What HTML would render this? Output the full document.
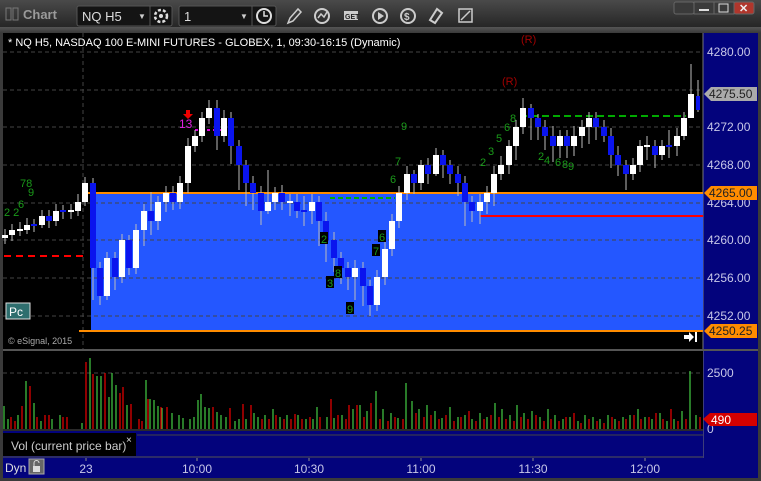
<!DOCTYPE html>
<html><head><meta charset="utf-8"><style>
html,body{margin:0;padding:0;background:#3a3a3a;width:761px;height:481px;overflow:hidden;font-family:"Liberation Sans",sans-serif}
svg{display:block}
</style></head><body>
<svg width="761" height="481" viewBox="0 0 761 481" xmlns="http://www.w3.org/2000/svg" font-family="Liberation Sans, sans-serif">
<defs>
<linearGradient id="tb" x1="0" y1="0" x2="0" y2="1"><stop offset="0" stop-color="#4a4a4a"/><stop offset="1" stop-color="#262626"/></linearGradient>
<linearGradient id="tb2" x1="0" y1="0" x2="0" y2="1"><stop offset="0" stop-color="#555"/><stop offset="1" stop-color="#3a3a3a"/></linearGradient>
</defs>
<rect x="0" y="0" width="761" height="481" fill="#3a3a3a"/>
<rect x="0" y="0" width="761" height="27" fill="url(#tb)"/>
<rect x="0" y="27" width="761" height="6" fill="url(#tb2)"/>
<!-- title -->
<rect x="6" y="8" width="5" height="12" fill="none" stroke="#777"/><rect x="13" y="8" width="5" height="12" fill="none" stroke="#777"/>
<text x="23" y="19" font-size="13" fill="#9a9a9a" font-weight="bold">Chart</text>
<rect x="77" y="6" width="95" height="20" rx="2" fill="#141414" stroke="#555"/>
<text x="82" y="21" font-size="13" fill="#ddd">NQ H5</text>
<text x="138" y="19" font-size="8" fill="#ccc">▼</text>
<line x1="150" y1="6" x2="150" y2="26" stroke="#555"/>
<circle cx="161" cy="16" r="6" fill="none" stroke="#ddd" stroke-width="2.5" stroke-dasharray="3 2"/><circle cx="161" cy="16" r="2" fill="#ddd"/>
<rect x="179" y="6" width="97" height="20" rx="2" fill="#141414" stroke="#555"/>
<text x="184" y="21" font-size="13" fill="#ddd">1</text>
<text x="240" y="19" font-size="8" fill="#ccc">▼</text>
<line x1="252" y1="6" x2="252" y2="26" stroke="#555"/>
<circle cx="264" cy="16" r="7" fill="none" stroke="#ddd" stroke-width="2"/><path d="M264 11V16H268" stroke="#ddd" stroke-width="1.5" fill="none"/>
<path d="M288 23L290 18L298 9L301 12L293 21Z" fill="none" stroke="#ccc" stroke-width="1.5"/>
<circle cx="322" cy="16" r="7" fill="none" stroke="#ccc" stroke-width="2"/><path d="M318 18L321 14L324 17L327 12" stroke="#ccc" fill="none" stroke-width="1.5"/>
<rect x="344" y="11" width="14" height="9" fill="#ccc"/><text x="345" y="19" font-size="7" font-weight="bold" fill="#222">GET</text>
<circle cx="380" cy="16" r="7" fill="none" stroke="#ccc" stroke-width="2"/><path d="M378 12L384 16L378 20Z" fill="#ccc"/>
<circle cx="408" cy="16" r="7" fill="none" stroke="#ccc" stroke-width="2"/><text x="404" y="20" font-size="10" fill="#ccc" font-weight="bold">$</text>
<path d="M430 20L437 9L442 13L435 23Z" fill="none" stroke="#ccc" stroke-width="2"/>
<rect x="459" y="9" width="13" height="13" fill="none" stroke="#ccc" stroke-width="1.5"/><path d="M461 20L470 11" stroke="#ccc" stroke-width="1.5"/>
<rect x="674" y="2" width="20" height="12" rx="2" fill="#3a3a3a" stroke="#666"/>
<rect x="694" y="2" width="20" height="12" fill="#3a3a3a" stroke="#666"/><line x1="699" y1="10" x2="709" y2="10" stroke="#ddd" stroke-width="2"/>
<rect x="714" y="2" width="20" height="12" fill="#3a3a3a" stroke="#666"/><rect x="719" y="4" width="9" height="8" fill="none" stroke="#ddd"/>
<rect x="734" y="2" width="20" height="12" rx="2" fill="#b0362c" stroke="#666"/><text x="739" y="12" font-size="11" font-weight="bold" fill="#eee">✕</text>

<!-- chart area -->
<rect x="3" y="33" width="700" height="316" fill="#000"/>
<rect x="703" y="33" width="55" height="445" fill="#03037c"/>
<line x1="703" y1="33" x2="703" y2="458" stroke="#777"/>
<rect x="91" y="193" width="612" height="138" fill="#2457ff"/>
<g stroke="#444" stroke-dasharray="4 3">
<line x1="3" y1="52" x2="703" y2="52"/><line x1="3" y1="90" x2="703" y2="90"/><line x1="3" y1="127" x2="703" y2="127"/><line x1="3" y1="165" x2="703" y2="165"/><line x1="3" y1="203" x2="703" y2="203"/><line x1="3" y1="240" x2="703" y2="240"/><line x1="3" y1="278" x2="703" y2="278"/><line x1="3" y1="316" x2="703" y2="316"/>
<line x1="83" y1="33" x2="83" y2="458"/>
</g>
<line x1="84" y1="193" x2="703" y2="193" stroke="#ff8c00" stroke-width="2"/>
<line x1="79" y1="331" x2="703" y2="331" stroke="#ff8c00" stroke-width="2"/>
<line x1="480" y1="216" x2="703" y2="216" stroke="#f00" stroke-width="2"/>
<line x1="4" y1="256" x2="83" y2="256" stroke="#f00" stroke-width="2" stroke-dasharray="7 5"/>
<line x1="520" y1="116" x2="686" y2="116" stroke="#0a0" stroke-width="2" stroke-dasharray="7 4"/>
<line x1="330" y1="198" x2="395" y2="198" stroke="#0a0" stroke-width="2" stroke-dasharray="5 3"/>
<line x1="195" y1="130" x2="225" y2="130" stroke="#d0d" stroke-width="2" stroke-dasharray="3 3"/>

<!-- wicks -->
<path stroke="#bbb" fill="none" d="M5 229V244M12 224V241M20 222V236M27 218V234M34 219V232M42 210V228M49 210V228M56 204V226M63 205V219M71 204V219M78 194V216M85 177V206M93 178V300M100 262V305M107 252V300M115 252V290M122 234V283M129 235V275M136 224V274M144 204V246M151 192V235M158 196V230M166 186V212M173 186V210M180 176V209M188 138V193M195 130V152M202 112V142M209 100V124M217 100V150M224 110V142M231 112V164M239 140V190M246 160V206M253 176V210M261 186V225M268 170V214M275 187V210M282 185V210M290 194V216M297 194V218M304 196V226M312 194V224M319 196V246M326 212V262M334 232V272M341 252V284M348 262V290M355 260V300M363 262V306M370 280V316M377 270V311M385 242V285M392 214V256M399 186V228M407 166V200M414 170V194M421 160V190M428 158V184M436 148V176M443 150V178M450 160V184M458 166V196M465 176V226M472 196V222M480 194V224M487 186V214M494 166V206M501 156V180M509 140V174M516 120V160M523 98V134M531 104V140M538 114V140M545 120V150M553 126V162M560 130V158M567 130V158M574 126V156M582 120V148M589 112V144M596 112V140M604 120V142M611 128V168M618 146V176M626 160V190M633 158V180M640 140V172M647 136V160M655 140V168M662 140V160M669 130V158M677 128V156M684 112V140M691 64V110M698 80V112"/>
<!-- candles -->
<g fill="#fff">
<rect x="2" y="235" width="6" height="3"/><rect x="9" y="230" width="6" height="5"/><rect x="17" y="229" width="6" height="2"/><rect x="24" y="225" width="6" height="5"/><rect x="39" y="216" width="6" height="9"/><rect x="53" y="211" width="6" height="10"/><rect x="68" y="210" width="6" height="2"/><rect x="75" y="202" width="6" height="9"/><rect x="82" y="183" width="6" height="19"/>
<rect x="104" y="258" width="6" height="38"/><rect x="119" y="240" width="6" height="37"/><rect x="133" y="230" width="6" height="38"/><rect x="141" y="211" width="6" height="19"/><rect x="155" y="202" width="6" height="19"/><rect x="163" y="193" width="6" height="9"/><rect x="177" y="183" width="6" height="19"/><rect x="185" y="146" width="6" height="37"/><rect x="192" y="136" width="6" height="10"/><rect x="199" y="118" width="6" height="18"/><rect x="206" y="108" width="6" height="10"/><rect x="221" y="118" width="6" height="18"/>
<rect x="265" y="202" width="6" height="9"/><rect x="272" y="193" width="6" height="9"/><rect x="287" y="201" width="6" height="2"/><rect x="309" y="202" width="6" height="9"/><rect x="352" y="268" width="6" height="9"/><rect x="374" y="277" width="6" height="28"/><rect x="382" y="249" width="6" height="28"/><rect x="389" y="221" width="6" height="28"/><rect x="396" y="193" width="6" height="28"/><rect x="404" y="174" width="6" height="19"/><rect x="418" y="165" width="6" height="18"/><rect x="433" y="155" width="6" height="19"/>
<rect x="477" y="202" width="6" height="9"/><rect x="484" y="193" width="6" height="9"/><rect x="491" y="174" width="6" height="19"/><rect x="498" y="165" width="6" height="9"/><rect x="506" y="146" width="6" height="19"/><rect x="513" y="127" width="6" height="19"/><rect x="520" y="108" width="6" height="19"/><rect x="557" y="136" width="6" height="10"/><rect x="571" y="136" width="6" height="10"/><rect x="579" y="127" width="6" height="9"/><rect x="586" y="118" width="6" height="9"/><rect x="630" y="165" width="6" height="9"/><rect x="637" y="146" width="6" height="19"/><rect x="644" y="145" width="6" height="2"/><rect x="659" y="146" width="6" height="9"/><rect x="674" y="136" width="6" height="10"/><rect x="681" y="118" width="6" height="18"/><rect x="688" y="94" width="6" height="24"/>
</g>
<g fill="#0a14ee">
<rect x="31" y="224" width="6" height="2"/><rect x="46" y="216" width="6" height="5"/><rect x="60" y="210" width="6" height="2"/><rect x="90" y="183" width="6" height="85"/><rect x="97" y="268" width="6" height="28"/><rect x="112" y="258" width="6" height="19"/><rect x="126" y="240" width="6" height="28"/><rect x="148" y="211" width="6" height="10"/><rect x="170" y="193" width="6" height="9"/><rect x="214" y="108" width="6" height="28"/><rect x="228" y="118" width="6" height="28"/><rect x="236" y="146" width="6" height="19"/><rect x="243" y="165" width="6" height="18"/><rect x="250" y="183" width="6" height="10"/><rect x="258" y="193" width="6" height="18"/><rect x="279" y="193" width="6" height="9"/><rect x="294" y="202" width="6" height="9"/><rect x="301" y="210" width="6" height="2"/><rect x="316" y="202" width="6" height="19"/><rect x="323" y="221" width="6" height="19"/><rect x="331" y="240" width="6" height="18"/><rect x="338" y="258" width="6" height="10"/><rect x="345" y="268" width="6" height="9"/><rect x="360" y="268" width="6" height="18"/><rect x="367" y="286" width="6" height="19"/><rect x="411" y="174" width="6" height="9"/><rect x="425" y="165" width="6" height="9"/><rect x="440" y="155" width="6" height="10"/><rect x="447" y="165" width="6" height="9"/><rect x="455" y="174" width="6" height="9"/><rect x="462" y="183" width="6" height="19"/><rect x="469" y="202" width="6" height="9"/><rect x="528" y="108" width="6" height="10"/><rect x="535" y="118" width="6" height="9"/><rect x="542" y="127" width="6" height="9"/><rect x="550" y="136" width="6" height="10"/><rect x="564" y="136" width="6" height="10"/><rect x="593" y="118" width="6" height="9"/><rect x="601" y="127" width="6" height="9"/><rect x="608" y="136" width="6" height="19"/><rect x="615" y="155" width="6" height="10"/><rect x="623" y="165" width="6" height="9"/><rect x="652" y="146" width="6" height="9"/><rect x="666" y="145" width="6" height="2"/><rect x="696" y="96" width="4" height="14"/>
</g>
<!-- count labels -->
<g fill="#1a9a1a" font-size="11">
<text x="20" y="187">78</text><text x="28" y="196">9</text><text x="4" y="216">2 2</text><text x="18" y="208">6</text>
<text x="401" y="130">9</text><text x="395" y="165">7</text><text x="390" y="183">6</text>
<text x="480" y="166">2</text><text x="488" y="155">3</text><text x="496" y="142">5</text><text x="504" y="131">6</text><text x="510" y="122">8</text>
<text x="538" y="160">2</text><text x="544" y="164">4</text><text x="555" y="166">6</text><text x="562" y="168">8</text><text x="568" y="170">9</text>
</g>
<g fill="#000"><rect x="320" y="232" width="8" height="12"/><rect x="326" y="276" width="8" height="12"/><rect x="334" y="266" width="8" height="12"/><rect x="346" y="302" width="8" height="12"/><rect x="372" y="244" width="8" height="12"/><rect x="378" y="230" width="8" height="12"/></g>
<g fill="#1a9a1a" font-size="11"><text x="321" y="243">2</text><text x="327" y="287">3</text><text x="335" y="277">8</text><text x="347" y="313">9</text><text x="373" y="255">7</text><text x="379" y="241">6</text></g>
<path d="M186 110h4v4h3l-5 5l-5-5h3z" fill="#e00"/>
<text x="179" y="128" font-size="12" fill="#e020e0">13</text>
<text x="521" y="43" font-size="11" fill="#a00000">(R)</text>
<text x="502" y="85" font-size="11" fill="#a00000">(R)</text>
<text x="8" y="46" font-size="11" fill="#fff">* NQ H5, NASDAQ 100 E-MINI FUTURES - GLOBEX, 1, 09:30-16:15 (Dynamic)</text>
<rect x="6" y="303" width="24" height="16" fill="#2e6e6e" stroke="#ddd"/><text x="9" y="316" font-size="12" fill="#fff">Pc</text>
<text x="8" y="344" font-size="9" fill="#aaa">© eSignal, 2015</text>
<path d="M684 335h5v-3l5 5l-5 5v-3h-5z" fill="#fff"/><rect x="695" y="332" width="2" height="10" fill="#fff"/>

<!-- price axis labels -->
<g fill="#c8c8e8" font-size="12">
<text x="707" y="56">4280.00</text><text x="707" y="131">4272.00</text><text x="707" y="169">4268.00</text><text x="707" y="207">4264.00</text><text x="707" y="244">4260.00</text><text x="707" y="282">4256.00</text><text x="707" y="320">4252.00</text>
</g>
<path d="M704 94L711 87H757V101H711Z" fill="#aaa"/><text x="709" y="98" font-size="12" fill="#222">4275.50</text>
<path d="M704 193L711 186H757V200H711Z" fill="#ff8c00"/><text x="709" y="197" font-size="12" fill="#222">4265.00</text>
<path d="M704 331L711 324H757V338H711Z" fill="#ff8c00"/><text x="709" y="335" font-size="12" fill="#222">4250.25</text>

<!-- volume pane -->
<rect x="3" y="349" width="755" height="2" fill="#555"/>
<rect x="3" y="351" width="700" height="80" fill="#000"/>
<line x1="3" y1="373" x2="703" y2="373" stroke="#444" stroke-dasharray="4 3"/>
<path stroke="#4c4" stroke-width="1.2" d="M4 429v-23M8 429v-10M18 429v-14M26 429v-48M34 429v-26M41 429v-8M52 429v-10M60 429v-14M82 429v-6M90 429v-71M97 429v-53M101 429v-53M109 429v-32M112 429v-56M116 429v-44M127 429v-24M146 429v-49M150 429v-30M154 429v-29M158 429v-23M162 429v-21M172 429v-16M179 429v-14M183 429v-11M190 429v-10M194 429v-12M198 429v-29M201 429v-35M205 429v-22M209 429v-21M217 429v-17M221 429v-14M226 429v-12M235 429v-8M239 429v-10M246 429v-10M254 429v-16M258 429v-12M265 429v-14M273 429v-20M280 429v-12M287 429v-14M298 429v-14M306 429v-10M313 429v-10M317 429v-22M327 429v-12M334 429v-11M342 429v-14M353 429v-20M360 429v-24M367 429v-18M376 429v-38M383 429v-20M391 429v-16M398 429v-11M406 429v-46M412 429v-28M419 429v-20M427 429v-24M435 429v-18M442 429v-11M450 429v-22M458 429v-12M465 429v-14M472 429v-10M480 429v-16M487 429v-12M495 429v-26M502 429v-20M510 429v-14M517 429v-24M524 429v-16M532 429v-18M540 429v-12M548 429v-20M555 429v-14M563 429v-10M570 429v-12M578 429v-8M585 429v-14M593 429v-12M600 429v-10M608 429v-14M615 429v-10M623 429v-12M630 429v-14M638 429v-20M645 429v-12M652 429v-10M660 429v-16M667 429v-8M674 429v-10M682 429v-18M690 429v-58M696 429v-14"/>
<path stroke="#e00" stroke-width="1.2" d="M11 429v-12M15 429v-8M22 429v-23M30 429v-43M37 429v-12M45 429v-14M49 429v-14M63 429v-12M67 429v-12M86 429v-67M93 429v-55M105 429v-56M120 429v-36M123 429v-42M131 429v-25M139 429v-10M142 429v-8M148 429v-30M161 429v-22M167 429v-22M213 429v-22M230 429v-21M243 429v-25M251 429v-24M262 429v-10M269 429v-10M276 429v-14M284 429v-10M291 429v-10M295 429v-15M302 429v-10M310 429v-12M320 429v-12M331 429v-30M338 429v-14M346 429v-10M349 429v-24M357 429v-24M364 429v-12M371 429v-26M380 429v-10M388 429v-8M395 429v-12M403 429v-10M416 429v-16M424 429v-12M431 429v-14M439 429v-10M446 429v-14M454 429v-8M461 429v-12M469 429v-18M476 429v-8M484 429v-10M491 429v-14M499 429v-12M506 429v-10M514 429v-8M521 429v-12M528 429v-10M536 429v-14M544 429v-8M551 429v-10M559 429v-8M566 429v-12M574 429v-16M581 429v-6M589 429v-10M597 429v-8M604 429v-6M612 429v-12M619 429v-8M626 429v-10M634 429v-14M641 429v-10M649 429v-12M656 429v-16M663 429v-10M671 429v-20M678 429v-8M686 429v-10M700 429v-12"/>
<line x1="3" y1="430" x2="703" y2="430" stroke="#555"/>
<text x="707" y="377" font-size="12" fill="#c8c8e8">2500</text>
<text x="707" y="433" font-size="12" fill="#c8c8e8">0</text>
<path d="M703 419L710 413H757V426H710Z" fill="#d40000"/><text x="711" y="424" font-size="12" fill="#fff">490</text>

<!-- vol label row -->
<rect x="3" y="431" width="700" height="27" fill="#03037c"/>
<rect x="3" y="433" width="133" height="23" fill="#000"/>
<line x1="137" y1="435" x2="703" y2="435" stroke="#444"/>
<text x="11" y="450" font-size="12" fill="#ccc">Vol (current price bar)</text>
<text x="126" y="443" font-size="10" fill="#ddd">×</text>
<line x1="3" y1="457" x2="703" y2="457" stroke="#555"/>
<!-- time axis -->
<rect x="3" y="458" width="755" height="20" fill="#03037c"/>
<text x="5" y="472" font-size="12" fill="#ddd">Dyn</text>
<rect x="29" y="459" width="15" height="15" fill="#666" stroke="#aaa"/><rect x="33" y="466" width="7" height="6" fill="#ddd"/><path d="M34 466v-3a2.5 2.5 0 0 1 5 0" stroke="#ddd" fill="none"/>
<g stroke="#888"><line x1="86" y1="458" x2="86" y2="461"/><line x1="197" y1="458" x2="197" y2="461"/><line x1="309" y1="458" x2="309" y2="461"/><line x1="421" y1="458" x2="421" y2="461"/><line x1="533" y1="458" x2="533" y2="461"/><line x1="645" y1="458" x2="645" y2="461"/></g>
<g fill="#c8c8e8" font-size="12" text-anchor="middle">
<text x="86" y="473">23</text><text x="197" y="473">10:00</text><text x="309" y="473">10:30</text><text x="421" y="473">11:00</text><text x="533" y="473">11:30</text><text x="645" y="473">12:00</text>
</g>
</svg>
</body></html>
